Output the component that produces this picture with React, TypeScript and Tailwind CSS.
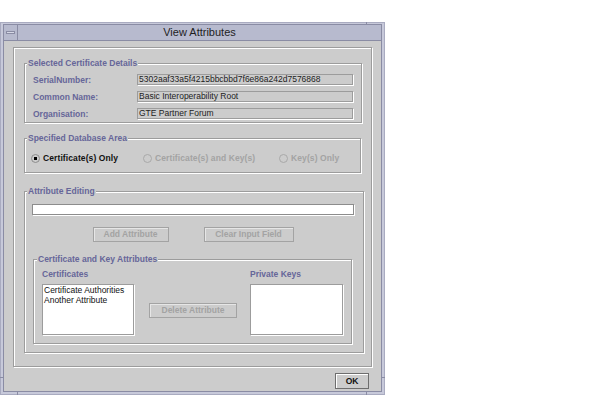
const etched = 'border border-[#9c9c9c] shadow-[1px_1px_0_#ffffff,inset_1px_1px_0_#ffffff]';
const labelText = 'text-[8.5px] leading-[10px] font-bold text-[#666699]';

const details = [
  { label: 'SerialNumber:', value: '5302aaf33a5f4215bbcbbd7f6e86a242d7576868' },
  { label: 'Common Name:', value: 'Basic Interoperability Root' },
  { label: 'Organisation:', value: 'GTE Partner Forum' },
];

const Group = ({
  title,
  className = '',
  legendClass = 'ml-[2px]',
  children,
}: {
  title: string;
  className?: string;
  legendClass?: string;
  children: React.ReactNode;
}) => (
  <fieldset className={`${etched} ${className}`}>
    <legend className={`${legendClass} bg-[#cccccc] px-[1px] ${labelText}`}>{title}</legend>
    {children}
  </fieldset>
);

const Radio = ({
  label,
  checked = false,
  className = '',
}: {
  label: string;
  checked?: boolean;
  className?: string;
}) => (
  <div className={`flex items-center ${className}`}>
    <svg width="9" height="9" viewBox="0 0 9 9" className="shrink-0">
      <circle cx="4.5" cy="4.5" r="4" fill="#cccccc" stroke={checked ? '#8c8c8c' : '#a8a8a8'} strokeWidth="1" />
      {checked && <rect x="3" y="3" width="3" height="3" fill="#000000" />}
    </svg>
    <span
      className={`ml-[3px] whitespace-nowrap text-[8.5px] leading-[10px] font-bold tracking-[0.1px] ${
        checked ? 'text-[#111111]' : 'text-[#a3a3a3]'
      }`}
    >
      {label}
    </span>
  </div>
);

const DisabledButton = ({ label, className = '' }: { label: string; className?: string }) => (
  <div
    className={`flex h-[15px] items-center justify-center border border-[#a3a3a3] shadow-[inset_1px_1px_0_#e6e6e6] text-[8.5px] font-bold text-[#a3a3a3] ${className}`}
  >
    {label}
  </div>
);

const App = () => {
  return (
    <div className="h-[398px] w-[610px] overflow-hidden bg-white pt-[22px] font-['Liberation_Sans',Arial,sans-serif]">
      <div className="relative flex h-[373px] w-[385px] flex-col border border-[#a9abc0] bg-[#c7c9da] px-[2px] pt-[1px] pb-[2px]">
        {/* resize corner marks on the frame */}
        <span className="absolute left-[-1px] top-[354px] h-px w-[3px] bg-[#8a8ca4]" />
        <span className="absolute right-[-1px] top-[354px] h-px w-[3px] bg-[#8a8ca4]" />
        <span className="absolute bottom-[-1px] left-[16px] h-[3px] w-px bg-[#8a8ca4]" />
        <span className="absolute bottom-[-1px] right-[17px] h-[3px] w-px bg-[#8a8ca4]" />
        <span className="absolute top-[-1px] right-[17px] h-[2px] w-px bg-[#8a8ca4]" />

        {/* title bar */}
        <div className="flex h-[17px] shrink-0 border border-[#8a8ca4] bg-[#b7bace]">
          <div className="flex w-[14px] items-center justify-center border-r border-[#8a8ca4]">
            <div className="h-[3px] w-[9px] border border-[#8a8ca4] bg-[#d6d8e6]" />
          </div>
          <div className="flex flex-1 items-center justify-center text-[11px] leading-[15px] text-[#1e1e1e]">
            View Attributes
          </div>
        </div>

        {/* dialog body */}
        <div className="flex flex-1 flex-col border-x border-b border-[#8a8ca4] bg-[#cccccc] pl-[9px] pr-[12px] pt-[6px]">
          <div className={`flex h-[320px] w-[359px] flex-col ${etched} px-[10px] pt-[10px]`}>
            <Group title="Selected Certificate Details">
              <div className="flex flex-col gap-[6px] px-[8px] pt-[6px] pb-[3px]">
                {details.map((row) => (
                  <div key={row.label} className="flex h-[11px] items-center">
                    <span className={`w-[104px] ${labelText}`}>{row.label}</span>
                    <div className="h-[11px] w-[216px] border border-[#9c9c9c] shadow-[1px_1px_0_#ffffff] pl-[1px] text-[8.5px] leading-[9px] text-[#222222]">
                      {row.value}
                    </div>
                  </div>
                ))}
              </div>
            </Group>

            <Group title="Specified Database Area" className="mt-[10px]">
              <div className="mt-[10px] mb-[9px] flex h-[10px] items-center pl-[6px]">
                <Radio label="Certificate(s) Only" checked className="w-[112px]" />
                <Radio label="Certificate(s) and Key(s)" className="w-[136px]" />
                <Radio label="Key(s) Only" />
              </div>
            </Group>

            <Group title="Attribute Editing" className="mt-[13px]">
              <div className="flex flex-col pl-[7px] pr-[9px] pt-[8px] pb-[8px]">
                <div className="h-[11px] border border-[#8c8c8c] bg-white shadow-[1px_1px_0_#ffffff]" />
                <div className="mt-[12px] flex justify-center gap-[35px]">
                  <DisabledButton label="Add Attribute" className="w-[76px]" />
                  <DisabledButton label="Clear Input Field" className="w-[90px]" />
                </div>

                <Group title="Certificate and Key Attributes" className="mt-[12px] ml-[1px] mr-[2px]" legendClass="ml-[3px]">
                  <div className="flex items-end px-[8px] pt-[5px] pb-[8px]">
                    <div className="flex w-[92px] flex-col">
                      <span className={labelText}>Certificates</span>
                      <div className="mt-[5px] h-[51px] border border-[#9c9c9c] bg-white shadow-[1px_1px_0_#ffffff] pl-[1px] text-[8.5px] leading-[10px] text-[#111111]">
                        <div>Certificate Authorities</div>
                        <div>Another Attribute</div>
                      </div>
                    </div>
                    <DisabledButton label="Delete Attribute" className="mb-[17px] ml-[15px] w-[88px]" />
                    <div className="ml-[13px] flex w-[93px] flex-col">
                      <span className={labelText}>Private Keys</span>
                      <div className="mt-[5px] h-[51px] border border-[#9c9c9c] bg-white shadow-[1px_1px_0_#ffffff]" />
                    </div>
                  </div>
                </Group>
              </div>
            </Group>
          </div>

          <div className="mt-[6px] flex justify-end">
            <div className="flex h-[16px] w-[34px] items-center justify-center border border-[#6e6e6e] shadow-[inset_1px_1px_0_#ffffff] text-[8.5px] font-bold text-[#111111]">
              OK
            </div>
          </div>
        </div>
      </div>
    </div>
  );
};

export default App;
